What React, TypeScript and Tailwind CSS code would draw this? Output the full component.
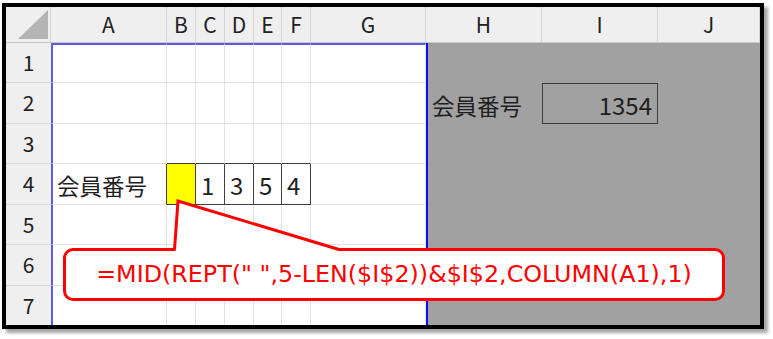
import React from 'react';

const COLS = ['A', 'B', 'C', 'D', 'E', 'F', 'G', 'H', 'I', 'J'] as const;
type Col = (typeof COLS)[number];

const WIDTH: Record<Col, string> = {
    A: 'w-[116px]',
    B: 'w-[29px]',
    C: 'w-[29px]',
    D: 'w-[29px]',
    E: 'w-[28px]',
    F: 'w-[29px]',
    G: 'w-[115px]',
    H: 'w-[116px]',
    I: 'w-[116px]',
    J: 'flex-1',
};

const ROWS = [
    { n: 1, h: 'h-[40px]' },
    { n: 2, h: 'h-[41px]' },
    { n: 3, h: 'h-[40px]' },
    { n: 4, h: 'h-[41px]' },
    { n: 5, h: 'h-[40px]' },
    { n: 6, h: 'h-[41px]' },
    { n: 7, h: 'h-[41px]' },
];

const DIGITS: Record<string, string> = { C4: '1', D4: '3', E4: '5', F4: '4' };
const BOXED = 'BCDEF';

const cellClass = (r: number, c: Col) => {
    const cls = [WIDTH[c], 'shrink-0 flex items-center overflow-hidden'];
    if (c === 'H' || c === 'I' || c === 'J') {
        cls.push('bg-[#a1a1a1]');
        if (c === 'H') cls.push('border-l-2 border-l-[#0d0de6] pl-[4px]');
        if (c === 'I' && r === 2) cls.push('border border-[#3c3c3c] justify-end pr-[5px]');
        return cls.join(' ');
    }
    const inBox = r === 4 && BOXED.includes(c);
    const aboveBox = r === 3 && BOXED.includes(c);
    cls.push(r === 4 && c === 'B' ? 'bg-[#ffff00]' : 'bg-white');
    cls.push('border-r border-b');
    cls.push(inBox || (r === 4 && c === 'A') ? 'border-r-[#404040]' : 'border-r-[#e1e1e1]');
    cls.push(inBox || aboveBox ? 'border-b-[#404040]' : 'border-b-[#e1e1e1]');
    if (c === 'A') cls.push('border-l-2 border-l-[#5b5be6] pl-[4px]');
    if (BOXED.includes(c)) cls.push('pl-[5px]');
    if (r === 1) cls.push('border-t-2 border-t-[#5b5be6]');
    return cls.join(' ');
};

const cellText = (r: number, c: Col) => {
    const key = `${c}${r}`;
    if (key === 'A4' || key === 'H2') return <span className="text-[22.5px] leading-none pt-[3px]">会員番号</span>;
    if (key === 'I2') return <span className="text-[24px] leading-none pt-[2px]">1354</span>;
    if (DIGITS[key]) return <span className="text-[24px] leading-none pt-[2px]">{DIGITS[key]}</span>;
    return null;
};

const Corner: React.FC = () => (
    <div className="w-[45px] h-full shrink-0 border-r border-r-[#d4d4d4] border-b border-b-[#c8c8c8] bg-[#efefef]">
        <svg width="44" height="35" viewBox="0 0 44 35">
            <polygon points="12,32 42,32 42,3" fill="#b4b4b4" />
        </svg>
    </div>
);

const Callout: React.FC = () => (
    <>
        <div className="absolute left-[57px] top-[241px] w-[662px] h-[53px] border-[3px] border-[#ff0000] rounded-[10px] bg-white flex items-center justify-center">
            <span className="font-['DejaVu_Sans',sans-serif] text-[23.8px] leading-none text-[#ff0000] whitespace-pre">
                =MID(REPT(" ",5-LEN($I$2))&amp;$I$2,COLUMN(A1),1)
            </span>
        </div>
        <svg className="absolute left-0 top-0 pointer-events-none" width="754" height="318" viewBox="0 0 754 318">
            <polygon points="169.5,244.5 172,194 333,244.5" fill="#ffffff" />
            <rect x="170" y="240.5" width="162" height="4" fill="#ffffff" />
            <polyline points="168.5,242.5 172,194 333,242.5" fill="none" stroke="#ff0000" strokeWidth="3" strokeLinejoin="miter" />
        </svg>
    </>
);

const App: React.FC = () => {
    return (
        <div className="w-[773px] h-[339px] bg-white pl-[2px] pt-[3px] font-['Noto_Sans_CJK_JP',sans-serif] text-[#1f1f1f]">
            <div className="relative w-[762px] h-[326px] border-4 border-black overflow-hidden bg-white shadow-[4px_4px_3px_rgba(0,0,0,0.35)]">
                <div className="flex h-[36px]">
                    <Corner />
                    {COLS.map((c) => (
                        <div
                            key={c}
                            className={`${WIDTH[c]} shrink-0 flex items-center justify-center bg-[#efefef] border-r border-r-[#d4d4d4] border-b border-b-[#c8c8c8] text-[21px] text-[#222]`}
                        >
                            {c}
                        </div>
                    ))}
                </div>
                {ROWS.map((row) => (
                    <div key={row.n} className={`flex ${row.h}`}>
                        <div className="w-[45px] shrink-0 flex items-center justify-center bg-[#efefef] border-b border-b-[#d8d8d8] text-[21px] text-[#222]">
                            {row.n}
                        </div>
                        {COLS.map((c) => (
                            <div key={c} className={cellClass(row.n, c)}>
                                {cellText(row.n, c)}
                            </div>
                        ))}
                    </div>
                ))}
                <Callout />
            </div>
        </div>
    );
};

export default App;
